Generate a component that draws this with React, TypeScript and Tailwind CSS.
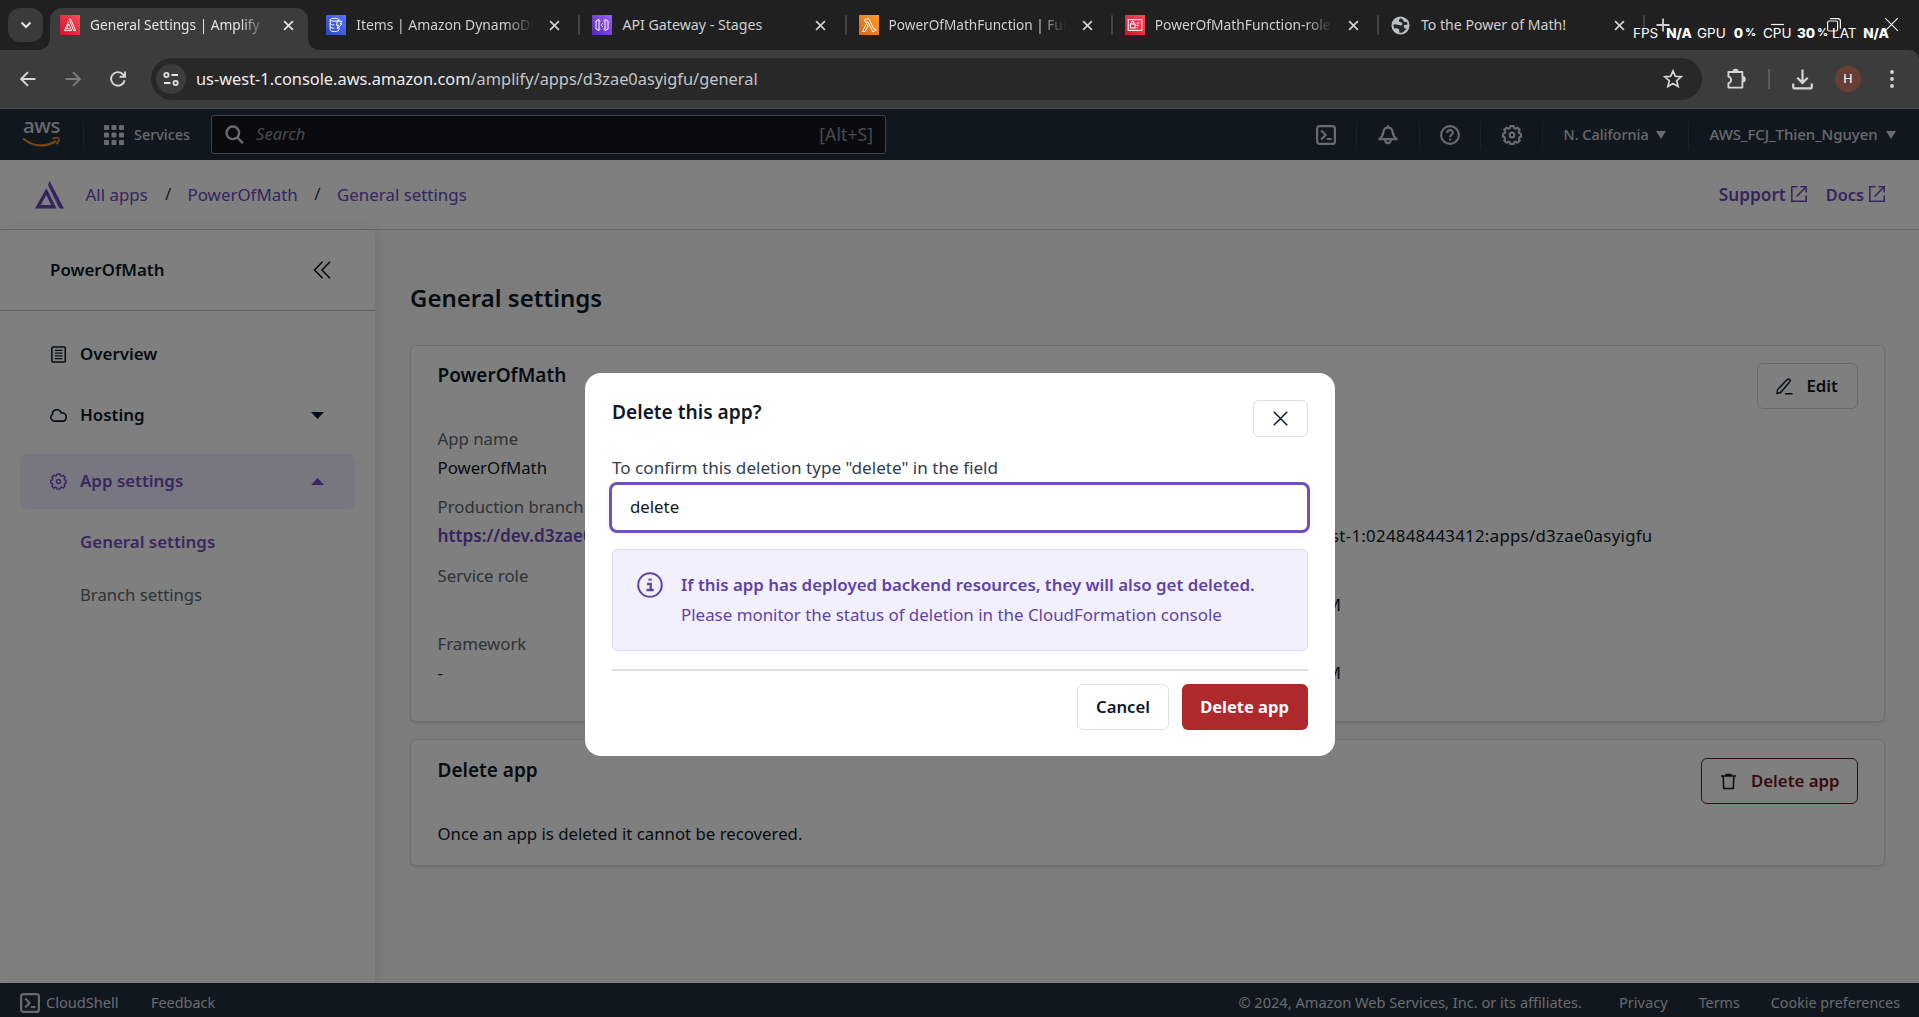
import React from "react";

type IconProps = { className?: string };

const CloseGlyph = ({ className = "" }: IconProps) => (
  <svg className={className} viewBox="0 0 12 12" fill="none" stroke="currentColor" strokeWidth="1.9">
    <path d="M1.2 1.2l9.6 9.6M10.8 1.2L1.2 10.8" />
  </svg>
);

const AmplifyFavicon = () => (
  <svg className="size-5 shrink-0" viewBox="0 0 20 20" fill="none">
    <defs>
      <linearGradient id="fav-amplify" x1="0" y1="20" x2="20" y2="0" gradientUnits="userSpaceOnUse">
        <stop stopColor="#d6102f" />
        <stop offset="1" stopColor="#ff4c56" />
      </linearGradient>
    </defs>
    <rect width="20" height="20" fill="url(#fav-amplify)" />
    <path d="M9.2 4h1.4l5 11.6h-2L9.2 4zM8.6 6.6L4.4 15.6h7.4M8.8 9l-2.3 4.8h3.6M8.8 9l2.8 6.600" stroke="#fff" strokeWidth=".9" />
  </svg>
);

const DynamoFavicon = () => (
  <svg className="size-5 shrink-0" viewBox="0 0 20 20" fill="none">
    <defs>
      <linearGradient id="fav-dynamo" x1="0" y1="20" x2="20" y2="0" gradientUnits="userSpaceOnUse">
        <stop stopColor="#2e45c4" />
        <stop offset="1" stopColor="#5577ff" />
      </linearGradient>
    </defs>
    <rect width="20" height="20" fill="url(#fav-dynamo)" />
    <g stroke="#fff" strokeWidth="1">
      <ellipse cx="8.6" cy="4.8" rx="4.4" ry="1.5" />
      <path d="M4.2 4.8v10c0 1 2 1.8 4.4 1.8s4.4-.8 4.4-1.8v-2M4.2 8.2c0 .9 1.8 1.6 4 1.6M4.2 11.6c0 .9 1.8 1.6 4 1.6M13 4.8v1" />
      <path d="M11.4 6.2h4.4l-1.6 2.6h1.8l-4.8 5 1.2-3.6h-2z" />
    </g>
  </svg>
);

const GatewayFavicon = () => (
  <svg className="size-5 shrink-0" viewBox="0 0 20 20" fill="none">
    <defs>
      <linearGradient id="fav-gateway" x1="0" y1="20" x2="20" y2="0" gradientUnits="userSpaceOnUse">
        <stop stopColor="#5527b8" />
        <stop offset="1" stopColor="#9a62ff" />
      </linearGradient>
    </defs>
    <rect width="20" height="20" fill="url(#fav-gateway)" />
    <g stroke="#fff" strokeWidth="1">
      <path d="M4 6l3-1.6v11.2L4 14zM16 6l-3-1.6v11.2L16 14z" />
      <path d="M11 8l-2 2 2 2M7.2 6h1.300M11.500 6h1.300M7.200 14h1.300M11.500 14h1.300" strokeWidth=".8" />
    </g>
  </svg>
);

const LambdaFavicon = () => (
  <svg className="size-5 shrink-0" viewBox="0 0 20 20" fill="none">
    <defs>
      <linearGradient id="fav-lambda" x1="0" y1="20" x2="20" y2="0" gradientUnits="userSpaceOnUse">
        <stop stopColor="#d9641a" />
        <stop offset="1" stopColor="#ff9f2a" />
      </linearGradient>
    </defs>
    <rect width="20" height="20" fill="url(#fav-lambda)" />
    <path d="M6 3.9h3.9l5 10.4 1.6-.5.6 1.7-3.4 1.2-4.5-9.5H6zM7.6 8.6l1.4 2.6-2.8 5.3H3.4z" stroke="#fff" strokeWidth="1" />
  </svg>
);

const IamFavicon = () => (
  <svg className="size-5 shrink-0" viewBox="0 0 20 20" fill="none">
    <defs>
      <linearGradient id="fav-iam" x1="0" y1="20" x2="20" y2="0" gradientUnits="userSpaceOnUse">
        <stop stopColor="#d4112d" />
        <stop offset="1" stopColor="#ff4b58" />
      </linearGradient>
    </defs>
    <rect width="20" height="20" fill="url(#fav-iam)" />
    <g stroke="#fff" strokeWidth="1.1">
      <rect x="3.2" y="4.6" width="13.6" height="10.8" />
      <rect x="5.4" y="9" width="4.6" height="4" />
      <path d="M6.4 9V7.6c0-1.6 2.6-1.6 2.6 0V9M11.6 8h3.2M11.6 10.4h2.2M11.6 12.8h1.4" />
    </g>
  </svg>
);

const GlobeFavicon = () => (
  <svg className="size-[19px] shrink-0" viewBox="0 0 20 20">
    <circle cx="10" cy="10" r="9.5" fill="#b9c0c5" />
    <path
      d="M10.500 2.300C8.400 3.300 7.800 4.600 8.600 5.800c.8 1.100 3 .6 3.400 2.200.3 1.300-.8 2-2.400 1.900-1.800-.1-3.600-1.300-6.900-1.100-.3 1.700.1 3.100 1 4.500 1.500-.5 3.400-.5 4.400.4.9.9.3 2 .9 3.800 1.500.3 2.900.1 4.300-.6-.2-1.700 2.400-1.700 3.200-3.600-1.500 0-2.200-.6-2.900-1.500-.7-.9-.2-2.200 1-2.400 1-.2 1.800.2 2.900-.6-.2-1-.6-1.900-1.200-2.700-1.200.6-2.300.3-3-.7-.6-1-1.100-2.600-2.800-3.100z"
      fill="#24272a"
    />
  </svg>
);

const tabs = [
  { title: "General Settings | Amplify | us-west-1", icon: <AmplifyFavicon />, fade: true, size: "text-[13.7px]" },
  { title: "Items | Amazon DynamoDB Management", icon: <DynamoFavicon />, fade: true, size: "text-[13.9px]" },
  { title: "API Gateway - Stages", icon: <GatewayFavicon />, fade: false, size: "text-[14.2px]" },
  { title: "PowerOfMathFunction | Functions", icon: <LambdaFavicon />, fade: true, size: "text-[13.6px]" },
  { title: "PowerOfMathFunction-role-9x", icon: <IamFavicon />, fade: true, size: "text-[13.8px]" },
  { title: "To the Power of Math!", icon: <GlobeFavicon />, fade: false, size: "text-[14.1px]" },
];

const Stat = ({ label, value, unit = "", className = "" }: { label: string; value: string; unit?: string; className?: string }) => (
  <span className={"flex items-center justify-between " + className}>
    <span>{label}</span>
    <span className="flex items-center font-extrabold">
      {value}
      {unit && <span className="ml-[2px] text-[10.500px]">{unit}</span>}
    </span>
  </span>
);

function TabStrip() {
  return (
    <div className="relative flex h-[50px] shrink-0 bg-[#202020] pl-2">
      <button className="mt-2 flex h-[34px] w-[35px] items-center justify-center rounded-xl bg-[#3a3a3a] text-[#e8e8e8]">
        <svg className="size-3" viewBox="0 0 12 12" fill="none" stroke="currentColor" strokeWidth="2">
          <path d="M1.500 3.500L6 8l4.500-4.500" />
        </svg>
      </button>
      <div className="ml-[7px] flex">
        {tabs.map((tab, i) => (
          <div
            key={tab.title}
            className={
              "relative flex w-[266.2px] items-center pl-[10px] " + (i === 0 ? "text-[#e3e3e3]" : "text-[#cfcfcf]")
            }
          >
            {i === 0 && (
              <div className="absolute top-2 bottom-0 left-0 w-[258px] rounded-t-[12px] bg-[#3c3c3c]">
                <svg className="absolute bottom-0 -left-3 size-3" viewBox="0 0 12 12">
                  <path d="M12 0v12H0C7 12 12 7 12 0z" fill="#3c3c3c" />
                </svg>
                <svg className="absolute -right-3 bottom-0 size-3" viewBox="0 0 12 12">
                  <path d="M0 0v12h12C5 12 0 7 0 0z" fill="#3c3c3c" />
                </svg>
              </div>
            )}
            <div className="relative flex items-center">
              <span className="flex w-5">{tab.icon}</span>
              <span
                className={
                  "ml-[10px] h-5 w-[179px] overflow-hidden leading-5 whitespace-nowrap " +
                  tab.size +
                  (tab.fade ? " [mask-image:linear-gradient(to_right,black_84%,transparent_99%)]" : "")
                }
              >
                {tab.title}
              </span>
              <CloseGlyph className="ml-[14px] size-[11px]" />
            </div>
            {i > 0 && <span className="absolute right-[2px] h-5 w-0.5 rounded bg-[#454545]" />}
          </div>
        ))}
      </div>
      <svg className="absolute top-[18px] left-[1656px] size-[14px]" viewBox="0 0 14 14" stroke="#d0d0d0" strokeWidth="1.800">
        <path d="M7 .5v13M.5 7h13" />
      </svg>
      <svg className="absolute top-[18px] left-[1771px] size-[13px]" viewBox="0 0 13 13" stroke="#f0f0f0" strokeWidth="1.200">
        <path d="M0 6.500h13" />
      </svg>
      <svg className="absolute top-[18px] left-[1827px] size-[14px]" viewBox="0 0 14 14" fill="none" stroke="#f0f0f0" strokeWidth="1.200">
        <rect x=".6" y="3" width="10" height="10" rx="1.500" />
        <path d="M3 .6h7.800a2.600 2.600 0 012.600 2.600v7.600" />
      </svg>
      <svg className="absolute top-[18px] left-[1885px] size-[13px]" viewBox="0 0 13 13" stroke="#f0f0f0" strokeWidth="1.200">
        <path d="M0 0l13 13M13 0L0 13" />
      </svg>
      <div className="absolute top-[24px] left-[1633px] flex h-[18px] items-center font-['Inter',sans-serif] text-[13.500px] whitespace-nowrap text-white">
        <Stat label="FPS" value="N/A" className="w-[59px]" />
        <Stat label="GPU" value="0" unit="%" className="ml-[5px] w-[59px]" />
        <Stat label="CPU" value="30" unit="%" className="ml-[7px] w-[65px]" />
        <Stat label="LAT" value="N/A" className="ml-[4px] w-[57px]" />
      </div>
    </div>
  );
}

function Toolbar() {
  return (
    <div className="flex h-[59px] shrink-0 items-center rounded-tr-[10px] border-b border-[#4a4f51] bg-[#3c3c3c] text-[#d6d6d6]">
      <svg className="ml-[20px] size-4" viewBox="0 0 16 16" fill="none" stroke="currentColor" strokeWidth="1.900">
        <path d="M15.500 8H1.500M8 1.200L1.200 8 8 14.800" />
      </svg>
      <svg className="ml-[29px] size-4 text-[#7d7d7d]" viewBox="0 0 16 16" fill="none" stroke="currentColor" strokeWidth="1.900">
        <path d="M.5 8h14M8 1.200L14.800 8 8 14.800" />
      </svg>
      <svg className="ml-[29px] size-4" viewBox="0 0 16 16" fill="none" stroke="currentColor" strokeWidth="1.900">
        <path d="M14.600 9.200A6.800 6.800 0 1112.900 3.300L14.500 5" />
        <path d="M15 .5v5.200H9.600" />
      </svg>
      <div className="ml-[24.500px] flex h-[42px] w-[1551px] items-center rounded-full bg-[#282828] pl-[5px]">
        <span className="flex size-[30px] items-center justify-center rounded-full bg-[#3c3c3c]">
          <svg className="size-4" viewBox="0 0 16 16" fill="none" stroke="#e3e3e3" strokeWidth="1.800">
            <circle cx="3.400" cy="4" r="2.100" />
            <path d="M8.500 4H15M1 12h6.500" />
            <circle cx="12.600" cy="12" r="2.100" />
          </svg>
        </span>
        <span className="ml-[10.500px] flex-1 pt-px text-[16.380px] whitespace-nowrap text-[#c3c5c8]">
          <span className="text-[#eeeeee]">us-west-1.console.aws.amazon.com</span>/amplify/apps/d3zae0asyigfu/general
        </span>
        <svg className="mr-[19px] size-5" viewBox="0 0 20 20" fill="none" stroke="currentColor" strokeWidth="1.700">
          <path d="M10 1.900l2.300 5.400 5.900.5-4.500 3.900 1.400 5.700L10 14.400l-5.100 3 1.400-5.700-4.500-3.900 5.900-.5z" />
        </svg>
      </div>
      <svg className="ml-[23px] size-[22px]" viewBox="0 0 22 22" fill="none" stroke="currentColor" strokeWidth="1.800" strokeLinejoin="round">
        <path d="M3.400 4h14v4.800a2 2 0 010 4.800v6h-14v-4.300c3.600-1.200 3.600-5.600 0-6.600z" />
        <path d="M8.300 3.600a2.200 1.900 0 014.400 0zM17.600 9.200a1.900 2 0 010 4z" fill="currentColor" />
      </svg>
      <span className="ml-[21.500px] h-5 w-0.5 bg-[#5c5c5c]" />
      <svg className="ml-[22px] size-[21px]" viewBox="0 0 21 21" fill="none" stroke="currentColor" strokeWidth="2.200">
        <path d="M10.500.5v13.200M5.300 8.700l5.200 5.200 5.200-5.200M1.200 14.500v3.200a1.700 1.700 0 001.700 1.700h15.200a1.700 1.700 0 001.700-1.700v-3.200" />
      </svg>
      <span className="ml-[22px] flex size-[26px] items-center justify-center rounded-full bg-[#6a3f33] font-['Roboto',sans-serif] text-[13px] text-white">
        H
      </span>
      <svg className="ml-[29px] h-[18px] w-1" viewBox="0 0 4 18" fill="currentColor">
        <circle cx="2" cy="2" r="1.900" />
        <circle cx="2" cy="9" r="1.900" />
        <circle cx="2" cy="16" r="1.900" />
      </svg>
    </div>
  );
}

const CloudShellIcon = ({ className = "" }: IconProps) => (
  <svg className={className} viewBox="0 0 20 20" fill="none" stroke="currentColor" strokeWidth="2.200">
    <rect x="1.100" y="1.100" width="17.800" height="17.800" rx="2.500" />
    <path d="M5.200 5.500L9.600 10l-4.400 4.500M10.800 14h4.600" />
  </svg>
);

const GearIcon = ({ className = "", stroke = 2.2 }: IconProps & { stroke?: number }) => (
  <svg className={className} viewBox="0 0 20 20" fill="none" stroke="currentColor" strokeWidth={stroke} strokeLinejoin="round">
    <path d="M8.300 1.100h3.400l.6 2 1.300.6 1.900-1 2.200 2.200-1 1.900.6 1.400 1.700.5v3l-1.700.6-.6 1.300 1 1.900-2.200 2.200-1.900-1-1.300.6-.6 1.700H8.300l-.6-1.700-1.300-.6-1.900 1-2.200-2.200 1-1.900-.6-1.300L1 11.700v-3l1.700-.5.6-1.400-1-1.900 2.200-2.200 1.900 1 1.300-.6z" />
    <circle cx="10" cy="10" r="2.400" />
  </svg>
);

const Divider = ({ className = "" }: IconProps) => <span className={"h-7 w-px bg-[#36414f] " + className} />;

const CaretDown = ({ className = "" }: IconProps) => (
  <svg className={className} viewBox="0 0 10 8" preserveAspectRatio="none" fill="currentColor">
    <path d="M0 0h10L5 8z" />
  </svg>
);

function NavBar() {
  return (
    <nav className="flex h-[51px] shrink-0 items-center bg-[#232f3e] text-[14.500px] font-medium text-[#d1d5db]">
      <div className="relative ml-[22px] h-[28px] w-[41px]">
        <span className="absolute -top-[9px] left-[1px] text-[20.500px] leading-[26px] font-medium tracking-[-0.4px]">aws</span>
        <svg className="absolute bottom-[2px] left-0 h-[10px] w-[38px]" viewBox="0 0 38 10" fill="none" stroke="#ef8f1d">
          <path d="M1 1.500C11 10 24 10.500 34 4" strokeWidth="2.200" />
          <path d="M30.500 1.700c2.500-1.100 5.200-1.200 6.200-.6.500 1.400-.3 4-2.200 6.200" strokeWidth="1.700" />
        </svg>
      </div>
      <Divider className="ml-[20px]" />
      <svg className="ml-[20px] size-5" viewBox="0 0 20 20" fill="currentColor">
        {[0, 7.500, 15].map((y) =>
          [0, 7.500, 15].map((x) => <rect key={x + "-" + y} x={x} y={y} width="5" height="5" rx="1" />),
        )}
      </svg>
      <span className="ml-[10px] w-[66px] text-[14.400px]">Services</span>
      <div className="ml-[11px] flex h-[39px] w-[675px] items-center rounded-[3px] border border-[#7d8998] bg-[#14141e] px-[13px] text-[16.600px] font-normal text-[#8b95a1]">
        <svg className="size-[19px] text-[#d1d5db]" viewBox="0 0 19 19" fill="none" stroke="currentColor" strokeWidth="2.400">
          <circle cx="7.800" cy="7.800" r="6.300" />
          <path d="M12.300 12.300l5.500 5.800" />
        </svg>
        <span className="ml-[12px] flex-1 italic">Search</span>
        <span className="-mr-px pb-px text-[17.700px]">[Alt+S]</span>
      </div>
      <div className="ml-auto flex items-center">
        <CloudShellIcon className="size-5" />
        <Divider className="ml-[20px]" />
        <svg className="ml-[21px] size-5" viewBox="0 0 20 20" fill="none" stroke="currentColor" strokeWidth="2.200" strokeLinejoin="round">
          <path d="M1.300 14.200C4.400 11.900 5 9.400 5.400 6.800 5.800 4 7.400 2.600 10 2.600s4.200 1.400 4.600 4.200c.4 2.600 1 5.100 4.100 7.400z" />
          <path d="M10 .3v2M7.200 14.800c0 4.400 5.600 4.400 5.600 0" />
        </svg>
        <Divider className="ml-[21px]" />
        <svg className="ml-[20px] size-5" viewBox="0 0 20 20" fill="none" stroke="currentColor" strokeWidth="2.100">
          <circle cx="10" cy="10" r="8.900" />
          <path d="M7.200 8c0-3.800 5.700-3.700 5.700-.4 0 2.200-2.800 2.100-2.800 4.500M10.100 13.400v2.200" />
        </svg>
        <Divider className="ml-[20px]" />
        <GearIcon className="ml-[21px] size-5" />
        <Divider className="ml-[20px]" />
        <span className="ml-[21px] w-[92px] text-[14.400px]">N. California</span>
        <CaretDown className="h-2 w-[10px]" />
        <Divider className="ml-[22px]" />
        <span className="ml-[21px] w-[176.500px] text-[15px] tracking-[-0.050px]">AWS_FCJ_Thien_Nguyen</span>
        <CaretDown className="mr-[23px] h-2 w-[10px]" />
      </div>
    </nav>
  );
}

const ExternalIcon = () => (
  <svg className="size-4" viewBox="0 0 16 16" fill="none" stroke="currentColor" strokeWidth="1.600">
    <path d="M6.500.8H.8v14.400h14.400V9.500M9.500.8h5.700v5.700M15 1L5.500 10.500" />
  </svg>
);

function Breadcrumbs() {
  return (
    <div className="flex h-[70px] shrink-0 items-center border-b border-[#cfd2d6] bg-white text-[16.900px] text-[#6a4abe]">
      <svg className="ml-[35px] h-[28px] w-[29px]" viewBox="0 0 29 28" fill="currentColor">
        <path d="M14.600 0L29 27.500h-4.600L13 4z" />
        <path d="M11.400 7.200L21.600 27.500H0zM11.200 14l-5.400 10h10.400z" fillRule="evenodd" />
      </svg>
      <span className="ml-[21.500px] w-[63.500px]">All apps</span>
      <span className="w-[38.500px] pb-px text-center text-[#304050]">/</span>
      <span className="w-[110.500px]">PowerOfMath</span>
      <span className="w-[39px] pb-px text-center text-[#304050]">/</span>
      <span>General settings</span>
      <div className="ml-auto flex items-center pr-[34px] font-semibold">
        <span className="mr-[5px] pt-px text-[17.200px]">Support</span>
        <ExternalIcon />
        <span className="mr-[5px] ml-[19px] pt-px text-[16.300px]">Docs</span>
        <ExternalIcon />
      </div>
    </div>
  );
}

function Sidebar() {
  return (
    <aside className="relative flex w-[375px] shrink-0 flex-col bg-white text-[16.900px] font-semibold text-[#0d1926] shadow-[2px_0_14px_rgba(0,0,0,0.09)]">
      <div className="flex h-[81px] items-center justify-between border-b border-[#bcbfc4] pr-[44px] pl-[50px]">
        <span>PowerOfMath</span>
        <svg className="size-[18px]" viewBox="0 0 18 18" fill="none" stroke="currentColor" strokeWidth="1.600">
          <path d="M9.500.8L1.500 9l8 8.200M17 .8L9 9l8 8.200" />
        </svg>
      </div>
      <div className="mt-[15px] flex h-[56px] items-center pl-[51px]">
        <svg className="mr-[13.500px] h-[17px] w-[15.500px]" viewBox="0 0 16 17" fill="none" stroke="currentColor" strokeWidth="1.600">
          <rect x=".9" y=".8" width="13.800" height="15.400" rx="1" />
          <path d="M4 4.300h7.800M4 7.100h7.800M4 9.900h7.800M4 12.700h7.800" strokeWidth="1.400" />
        </svg>
        Overview
      </div>
      <div className="mt-[5px] flex h-[56px] items-center pl-[50px]">
        <svg className="mr-[13px] h-[13px] w-[17px]" viewBox="0 0 17 13" fill="none" stroke="currentColor" strokeWidth="1.600">
          <path d="M4.900 12.100C2.500 12.100.8 10.500.8 8.300.8 7 1.400 6 2.400 5.400 2.500 2.700 4.400.8 7 .8c2.100 0 3.600 1.100 4.200 3 3-.3 5 1.500 5 4.100 0 2.400-1.600 4.200-4 4.200z" />
        </svg>
        <span className="flex-1">Hosting</span>
        <CaretDown className="mr-[51px] h-[7px] w-[13px]" />
      </div>
      <div className="mx-5 mt-[11px] flex h-[55px] items-center rounded-lg bg-[#f1edfd] pl-[30px] text-[#754dc4]">
        <GearIcon className="mr-[13px] size-[17px]" stroke={1.700} />
        <span className="flex-1 pb-px">App settings</span>
        <CaretDown className="mr-[31px] h-[7px] w-[13px] rotate-180" />
      </div>
      <div className="mt-[6px] flex h-[53px] items-center pl-[80px] text-[#754dc4]">General settings</div>
      <div className="flex h-[53px] items-center pl-[80px] text-[16.700px] font-normal text-[#5c6670]">Branch settings</div>
    </aside>
  );
}

function Field({ label, children }: { label: string; children?: React.ReactNode }) {
  return (
    <div className="h-[68.300px] leading-[29px]">
      <div className="text-[#5c6670]">{label}</div>
      <div className="whitespace-nowrap">{children}</div>
    </div>
  );
}

function MainContent() {
  return (
    <main className="flex min-w-0 flex-1 flex-col bg-[#f9f9fa] pr-[34px] pl-[35px] text-[16.800px] text-[#0d1926]">
      <h1 className="mt-[50px] text-[24px] leading-9 font-semibold">General settings</h1>
      <section className="relative mt-[29px] h-[377px] rounded-md border border-[#dcdee0] bg-white pl-[26.500px] shadow-sm">
        <h2 className="mt-[15px] text-[19px] leading-[29px] font-semibold">PowerOfMath</h2>
        <button className="absolute top-[17px] right-[26px] flex h-[46px] w-[101px] items-center rounded-md border border-[#d0d3d7] pl-[18px] font-semibold">
          <svg className="mr-[13.500px] size-[17px]" viewBox="0 0 17 17" fill="none" stroke="currentColor" strokeWidth="1.500">
            <path d="M1 15.500l.6-4L11.300 1.500c.8-.7 1.600-.6 2.300.1s.7 1.500 0 2.300L4.600 14.600zM9 15.700h7.500" />
          </svg>
          Edit
        </button>
        <div className="mt-[34px] grid grid-cols-[722px_1fr]">
          <div>
            <Field label="App name">PowerOfMath</Field>
            <Field label="Production branch URL">
              <span className="text-[17.200px] font-semibold text-[#6a4abe]">https://dev.d3zae0asyigfu</span>
            </Field>
            <Field label="Service role" />
            <Field label="Framework">-</Field>
          </div>
          <div>
            <Field label="" />
            <Field label="App ARN">
              <div className="flex w-[493px] justify-end tracking-[0.300px]">arn:aws:amplify:us-west-1:024848443412:apps/d3zae0asyigfu</div>
            </Field>
            <Field label="Created at">
              <div className="w-[181.500px] text-right">6/20/2024, 3:46:12 PM</div>
            </Field>
            <Field label="Last updated">
              <div className="w-[181.500px] text-right">6/20/2024, 3:58:40 PM</div>
            </Field>
          </div>
        </div>
      </section>
      <section className="relative mt-[17px] h-[127px] rounded-md border border-[#dcdee0] bg-white pl-[26.500px] shadow-sm">
        <h2 className="mt-[16px] text-[19px] leading-[29px] font-semibold">Delete app</h2>
        <button className="absolute top-[18px] right-[26px] flex h-[46px] w-[157px] items-center rounded-md border border-[#80161c] pl-[18px] font-semibold text-[#6c161d]">
          <svg className="mr-[14px] size-[17px] text-[#1c1416]" viewBox="0 0 17 17" fill="none" stroke="currentColor" strokeWidth="1.500">
            <path d="M1 3h15M6 2.600V1.600h5v1M3.200 3.200l.5 12.400h9.600l.5-12.400" />
          </svg>
          Delete app
        </button>
        <p className="mt-[34px] leading-[29px]">Once an app is deleted it cannot be recovered.</p>
      </section>
    </main>
  );
}

function Footer() {
  return (
    <footer className="flex h-[34px] shrink-0 items-center bg-[#232f3e] pt-[5px] text-[14.600px] text-[#d1d5db]">
      <CloudShellIcon className="ml-[20px] size-5" />
      <span className="ml-[6px] w-[105px]">CloudShell</span>
      <span className="text-[14.400px]">Feedback</span>
      <span className="ml-auto">© 2024, Amazon Web Services, Inc. or its affiliates.</span>
      <span className="ml-[37px]">Privacy</span>
      <span className="ml-[31px] text-[14.300px]">Terms</span>
      <span className="mr-[19px] ml-[31px] text-[14.300px]">Cookie preferences</span>
    </footer>
  );
}

function DeleteDialog() {
  return (
    <div
      role="dialog"
      className="mt-[3px] flex h-[383px] w-[750px] flex-col rounded-2xl bg-white px-[27px] pt-[27px] text-[16.800px] text-[#0d1926]"
    >
      <div className="flex h-[53px] items-start justify-between">
        <h2 className="-mt-[4px] ml-[0.500px] text-[19.150px] leading-[32px] font-semibold">Delete this app?</h2>
        <button className="flex h-[37px] w-[55px] items-center justify-center rounded-md border border-[#dcdee0]">
          <svg className="size-[15px]" viewBox="0 0 15 15" stroke="currentColor" strokeWidth="1.500">
            <path d="M.8.800l13.400 13.400M14.200.800L.8 14.200" />
          </svg>
        </button>
      </div>
      <label className="ml-[0.500px] h-[29px] text-[17.120px] leading-[29px] text-[#304050]">
        To confirm this deletion type "delete" in the field
      </label>
      <div className="-mx-[2.500px] flex h-[51px] shrink-0 items-center rounded-lg border-[3px] border-[#7350c0] pb-px pl-[18px] shadow-[0_2px_6px_rgba(0,0,0,0.05)]">
        delete
      </div>
      <div className="mt-[16px] flex h-[102px] shrink-0 rounded-md border border-[#dfd9fb] bg-[#f2effe] pt-[20px] pl-[24px] text-[#5f43a8]">
        <svg className="mt-[2px] size-[26px]" viewBox="0 0 26 26" fill="none" stroke="currentColor" strokeWidth="2">
          <circle cx="13" cy="13" r="11.800" />
          <path d="M11.500 6.600h3.200v2h-3.200z" fill="currentColor" stroke="none" />
          <path d="M10 12h3.700v5.500M9.500 18h7.200" strokeWidth="2.300" />
        </svg>
        <div className="ml-[18.500px] whitespace-nowrap">
          <div className="text-[16.880px] leading-[30px] font-semibold">
            If this app has deployed backend resources, they will also get deleted.
          </div>
          <div className="text-[16.920px] leading-[30px]">
            Please monitor the status of deletion in the CloudFormation console
          </div>
        </div>
      </div>
      <hr className="mt-[18px] border-t-2 border-[#dcdee0]" />
      <div className="mt-[13px] flex justify-end gap-[13px] text-[16.700px] font-semibold">
        <button className="h-[46px] w-[92px] rounded-md border border-[#dcdee0] pl-px">Cancel</button>
        <button className="h-[46px] w-[126px] rounded-md bg-[#ae292c] text-[16.500px] font-bold text-white">Delete app</button>
      </div>
    </div>
  );
}

export default function App() {
  return (
    <div className="flex h-[1017px] w-[1919px] flex-col overflow-hidden bg-[#202020] font-['Noto_Sans','Open_Sans',sans-serif]">
      <TabStrip />
      <Toolbar />
      <div className="relative flex min-h-0 flex-1 flex-col">
        <NavBar />
        <Breadcrumbs />
        <div className="flex min-h-0 flex-1">
          <Sidebar />
          <MainContent />
        </div>
        <Footer />
        <div className="absolute inset-0 flex items-center justify-center bg-black/50">
          <DeleteDialog />
        </div>
      </div>
    </div>
  );
}
